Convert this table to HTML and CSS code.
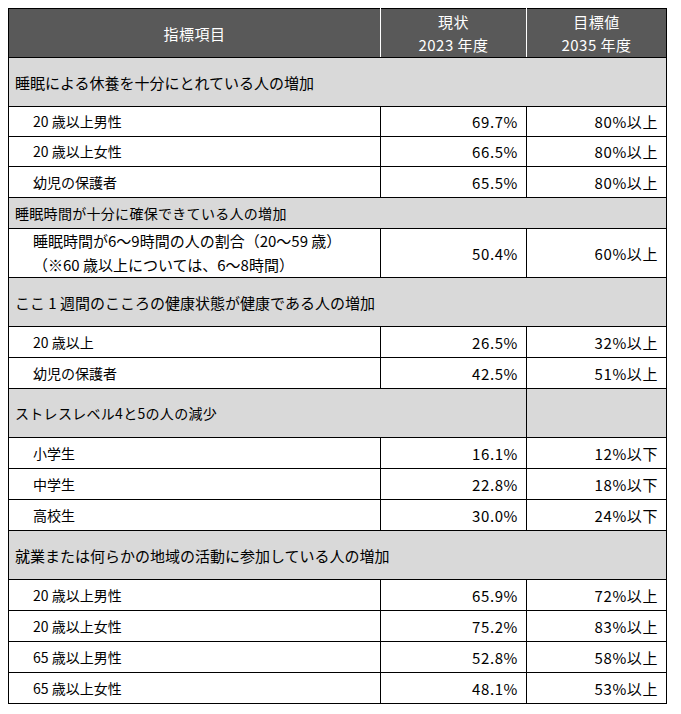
FILE: index.html
```html
<!DOCTYPE html>
<html lang="ja">
<head>
<meta charset="utf-8">
<link rel="stylesheet" href="styles.css">
</head>
<body>
<table class="tbl">
  <colgroup>
    <col class="c1"><col class="c2"><col class="c3">
  </colgroup>
  <thead>
    <tr class="hd">
      <th>指標項目</th>
      <th>現状<br>2023 年度</th>
      <th>目標値<br>2035 年度</th>
    </tr>
  </thead>
  <tbody>
    <tr class="grp tall"><td colspan="3">睡眠による休養を十分にとれている人の増加</td></tr>
    <tr class="row r30"><td class="lbl">20 歳以上男性</td><td class="num">69.7%</td><td class="num">80%以上</td></tr>
    <tr class="row r30"><td class="lbl">20 歳以上女性</td><td class="num">66.5%</td><td class="num">80%以上</td></tr>
    <tr class="row"><td class="lbl">幼児の保護者</td><td class="num">65.5%</td><td class="num">80%以上</td></tr>
    <tr class="grp small"><td colspan="3">睡眠時間が十分に確保できている人の増加</td></tr>
    <tr class="row tall"><td class="lbl two">睡眠時間が6～9時間の人の割合（20～59 歳）<br>（※60 歳以上については、6～8時間）</td><td class="num">50.4%</td><td class="num">60%以上</td></tr>
    <tr class="grp tall"><td colspan="3">ここ 1 週間のこころの健康状態が健康である人の増加</td></tr>
    <tr class="row"><td class="lbl">20 歳以上</td><td class="num">26.5%</td><td class="num">32%以上</td></tr>
    <tr class="row"><td class="lbl">幼児の保護者</td><td class="num">42.5%</td><td class="num">51%以上</td></tr>
    <tr class="grp tall small"><td colspan="2">ストレスレベル4と5の人の減少</td><td></td></tr>
    <tr class="row"><td class="lbl">小学生</td><td class="num">16.1%</td><td class="num">12%以下</td></tr>
    <tr class="row"><td class="lbl">中学生</td><td class="num">22.8%</td><td class="num">18%以下</td></tr>
    <tr class="row"><td class="lbl">高校生</td><td class="num">30.0%</td><td class="num">24%以下</td></tr>
    <tr class="grp tall"><td colspan="3">就業または何らかの地域の活動に参加している人の増加</td></tr>
    <tr class="row"><td class="lbl">20 歳以上男性</td><td class="num">65.9%</td><td class="num">72%以上</td></tr>
    <tr class="row"><td class="lbl">20 歳以上女性</td><td class="num">75.2%</td><td class="num">83%以上</td></tr>
    <tr class="row"><td class="lbl">65 歳以上男性</td><td class="num">52.8%</td><td class="num">58%以上</td></tr>
    <tr class="row"><td class="lbl">65 歳以上女性</td><td class="num">48.1%</td><td class="num">53%以上</td></tr>
  </tbody>
</table>
</body>
</html>
```
FILE: styles.css
```css
html, body {
  margin: 0;
  background: #fff;
}
body {
  padding: 8px;
  font-family: "Noto Sans CJK JP", "Noto Sans", sans-serif;
  font-size: 14px;
  color: #000;
}
.tbl {
  border-collapse: collapse;
  table-layout: fixed;
  width: 658px;
  border: 1px solid #000;
}
.c1 { width: 372px; }
.c2 { width: 146px; }
.c3 { width: 140px; }

.tbl td, .tbl th {
  border: 1px solid #000;
  padding: 0 8px;
  line-height: 23px;
  font-weight: normal;
  vertical-align: middle;
}
.tbl .hd { height: 49px; }
.tbl .hd th {
  background: #595959;
  color: #fff;
  text-align: center;
  font-size: 15px;
  letter-spacing: 0.5px;
  border-left-color: #fff;
  border-right-color: #fff;
  border-top-color: #000;
  border-bottom-color: #000;
}
.tbl .hd th:first-child { border-left-color: #000; }
.tbl .hd th:last-child { border-right-color: #000; }

.row, .grp { height: 31px; }
.r30 { height: 30px; }
.tall { height: 49px; }

.tbl .grp td {
  background: #d9d9d9;
  padding-left: 6px;
  font-size: 15px;
}
.tbl .grp.small td {
  font-size: 14px;
  letter-spacing: 0.3px;
}
.tbl .lbl {
  padding-left: 24px;
  font-size: 14px;
}
.tbl .two {
  line-height: 24px;
  font-size: 15px;
}
.tbl .num {
  text-align: right;
  font-size: 15px;
  letter-spacing: 0.6px;
}
```
